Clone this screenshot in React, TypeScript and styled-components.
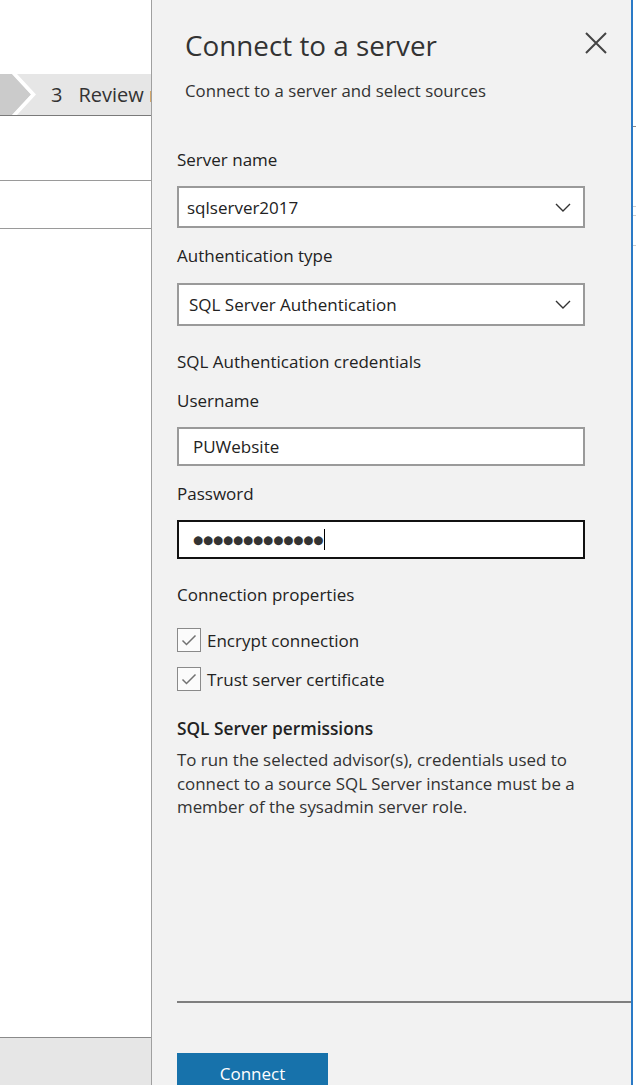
import React from 'react'
import styled, { createGlobalStyle } from 'styled-components'

const GlobalStyle = createGlobalStyle`
  html, body {
    margin: 0;
    padding: 0;
  }
  body {
    font-family: "Open Sans", "Noto Sans", Arial, sans-serif;
    background: #ffffff;
    overflow: hidden;
  }
`

const Page = styled.div`
  display: flex;
  width: 636px;
  height: 1085px;
  overflow: hidden;
`

// page behind the flyout
const Backdrop = styled.div`
  width: 151px;
  flex-shrink: 0;
  display: flex;
  flex-direction: column;
  overflow: hidden;
`

const Crumbs = styled.div`
  margin-top: 74px;
  height: 41px;
  background: #e6e6e6;
  border-bottom: 1px solid #7a7a7a;
  display: flex;
  align-items: center;
  white-space: nowrap;
  color: #333333;
  font-size: 20px;
`

const StepNumber = styled.span`
  margin-left: 15px;
`

const StepLabel = styled.span`
  margin-left: 16px;
  flex: 1;
  min-width: 0;
  overflow: hidden;
`

const TableRow = styled.div<{ $h: number }>`
  height: ${p => p.$h}px;
  border-bottom: 1px solid #9a9a9a;
`

const Spacer = styled.div`
  flex: 1;
`

const BottomBar = styled.div`
  height: 47px;
  border-top: 1px solid #8a8a8a;
  background: #e6e6e6;
`

const Panel = styled.div`
  width: 479px;
  flex-shrink: 0;
  background: #f2f2f2;
  border-left: 1px solid #a0a0a0;
  border-right: 2px solid #2a7ac6;
  display: flex;
  flex-direction: column;
  overflow: hidden;
`

const Header = styled.div`
  display: flex;
  justify-content: space-between;
  padding: 25px 24px 0 33px;
`

const Title = styled.h1`
  margin: 0;
  font-size: 27.8px;
  line-height: 40px;
  font-weight: 400;
  color: #333333;
`

const Subtitle = styled.p`
  margin: 15px 0 0;
  font-size: 16.8px;
  line-height: 22px;
  color: #333333;
`

const CloseButton = styled.button`
  margin-top: 7px;
  width: 22px;
  height: 22px;
  padding: 0;
  border: none;
  background: transparent;
  display: flex;
`

const Form = styled.div`
  flex: 1;
  padding: 47px 46px 0 25px;
  display: flex;
  flex-direction: column;
`

const Label = styled.div<{ $gap: number }>`
  margin-top: ${p => p.$gap}px;
  font-size: 17px;
  line-height: 22px;
  color: #222222;
`

const Field = styled.div<{ $h: number; $gap: number; $pad: number; $focused?: boolean }>`
  margin-top: ${p => p.$gap}px;
  height: ${p => p.$h}px;
  box-sizing: border-box;
  background: #ffffff;
  border: 2px solid ${p => (p.$focused ? '#111111' : '#9a9a9a')};
  padding: 0 12px 0 ${p => p.$pad}px;
  display: flex;
  align-items: center;
  justify-content: space-between;
  font-size: 17px;
  color: #222222;
`

const Dots = styled.span`
  font-family: "DejaVu Sans", sans-serif;
  font-size: 11.6px;
  letter-spacing: -0.1px;
  color: #333333;
`

const Caret = styled.span`
  display: inline-block;
  width: 0;
  height: 21px;
  border-left: 1.5px solid #000000;
  margin-left: 1px;
`

const Masked = styled.div`
  display: flex;
  align-items: center;
`

const CheckRow = styled.label<{ $gap: number }>`
  margin-top: ${p => p.$gap}px;
  display: flex;
  align-items: center;
  gap: 6px;
  font-size: 17px;
  color: #222222;
`

const Box = styled.span`
  width: 24px;
  height: 24px;
  box-sizing: border-box;
  border: 1px solid #8a8a8a;
  background: #fbfbfb;
  display: flex;
  align-items: center;
  justify-content: center;
`

const Heading = styled.div`
  margin-top: 27px;
  font-size: 17.3px;
  line-height: 22px;
  font-weight: 600;
  color: #222222;
`

const Note = styled.p`
  margin: 8px 0 0;
  font-size: 16.9px;
  line-height: 23.5px;
  color: #333333;
`

const Footer = styled.div`
  margin-left: 25px;
  height: 84px;
  flex-shrink: 0;
  box-sizing: border-box;
  border-top: 2px solid #7f7f7f;
  padding-top: 50px;
`

const ConnectButton = styled.button`
  width: 151px;
  height: 40px;
  border: none;
  background: #1772ab;
  color: #ffffff;
  font-family: inherit;
  font-size: 17px;
`

const RightEdge = styled.div`
  flex: 1;
  display: flex;
  flex-direction: column;
`

const EdgeLine = styled.div<{ $h: number; $dark?: boolean }>`
  height: ${p => p.$h}px;
  border-bottom: 1px solid ${p => (p.$dark ? '#8a8a8a' : '#cfcfcf')};
`

const Chevron = () => (
  <svg width="16" height="9" viewBox="0 0 16 9">
    <path d="M1 1 L8 8 L15 1" fill="none" stroke="#333" strokeWidth="1.4" />
  </svg>
)

const Check = () => (
  <svg width="18" height="18" viewBox="0 0 18 18">
    <path d="M2.5 9.5 L6.5 13.5 L15.5 4.5" fill="none" stroke="#727272" strokeWidth="1.5" />
  </svg>
)

const App: React.FC = () => {
  return (
    <Page>
      <GlobalStyle />
      <Backdrop>
        <Crumbs>
          <svg width="36" height="41" viewBox="0 0 36 41" style={{ flexShrink: 0 }}>
            <polygon points="0,0 12,0 31,20.5 12,41 0,41" fill="#cbcbcb" />
            <polygon points="12,0 17,0 36,20.5 17,41 12,41 31,20.5" fill="#ffffff" />
          </svg>
          <StepNumber>3</StepNumber>
          <StepLabel>Review r</StepLabel>
        </Crumbs>
        <TableRow $h={64} />
        <TableRow $h={47} />
        <Spacer />
        <BottomBar />
      </Backdrop>

      <Panel>
        <Header>
          <div>
            <Title>Connect to a server</Title>
            <Subtitle>Connect to a server and select sources</Subtitle>
          </div>
          <CloseButton aria-label="Close">
            <svg width="22" height="22" viewBox="0 0 22 22">
              <path d="M1 1 L21 21 M21 1 L1 21" stroke="#444" strokeWidth="2" />
            </svg>
          </CloseButton>
        </Header>

        <Form>
          <Label $gap={0}>Server name</Label>
          <Field $gap={15} $h={42} $pad={8}>
            <span>sqlserver2017</span>
            <Chevron />
          </Field>

          <Label $gap={17}>Authentication type</Label>
          <Field $gap={16} $h={43} $pad={10}>
            <span>SQL Server Authentication</span>
            <Chevron />
          </Field>

          <Label $gap={25}>SQL Authentication credentials</Label>
          <Label $gap={17}>Username</Label>
          <Field $gap={15} $h={39} $pad={14}>
            <span>PUWebsite</span>
          </Field>

          <Label $gap={17}>Password</Label>
          <Field $gap={15} $h={39} $pad={14} $focused>
            <Masked>
              <Dots>●●●●●●●●●●●●●</Dots>
              <Caret />
            </Masked>
          </Field>

          <Label $gap={25}>Connection properties</Label>
          <CheckRow $gap={22}>
            <Box><Check /></Box>
            Encrypt connection
          </CheckRow>
          <CheckRow $gap={15}>
            <Box><Check /></Box>
            Trust server certificate
          </CheckRow>

          <Heading>SQL Server permissions</Heading>
          <Note>
            To run the selected advisor(s), credentials used to<br />
            connect to a source SQL Server instance must be a<br />
            member of the sysadmin server role.
          </Note>
        </Form>

        <Footer>
          <ConnectButton>Connect</ConnectButton>
        </Footer>
      </Panel>

      <RightEdge>
        <EdgeLine $h={126} $dark />
        <EdgeLine $h={79} />
        <EdgeLine $h={8} />
        <EdgeLine $h={29} />
      </RightEdge>
    </Page>
  )
}

export default App
